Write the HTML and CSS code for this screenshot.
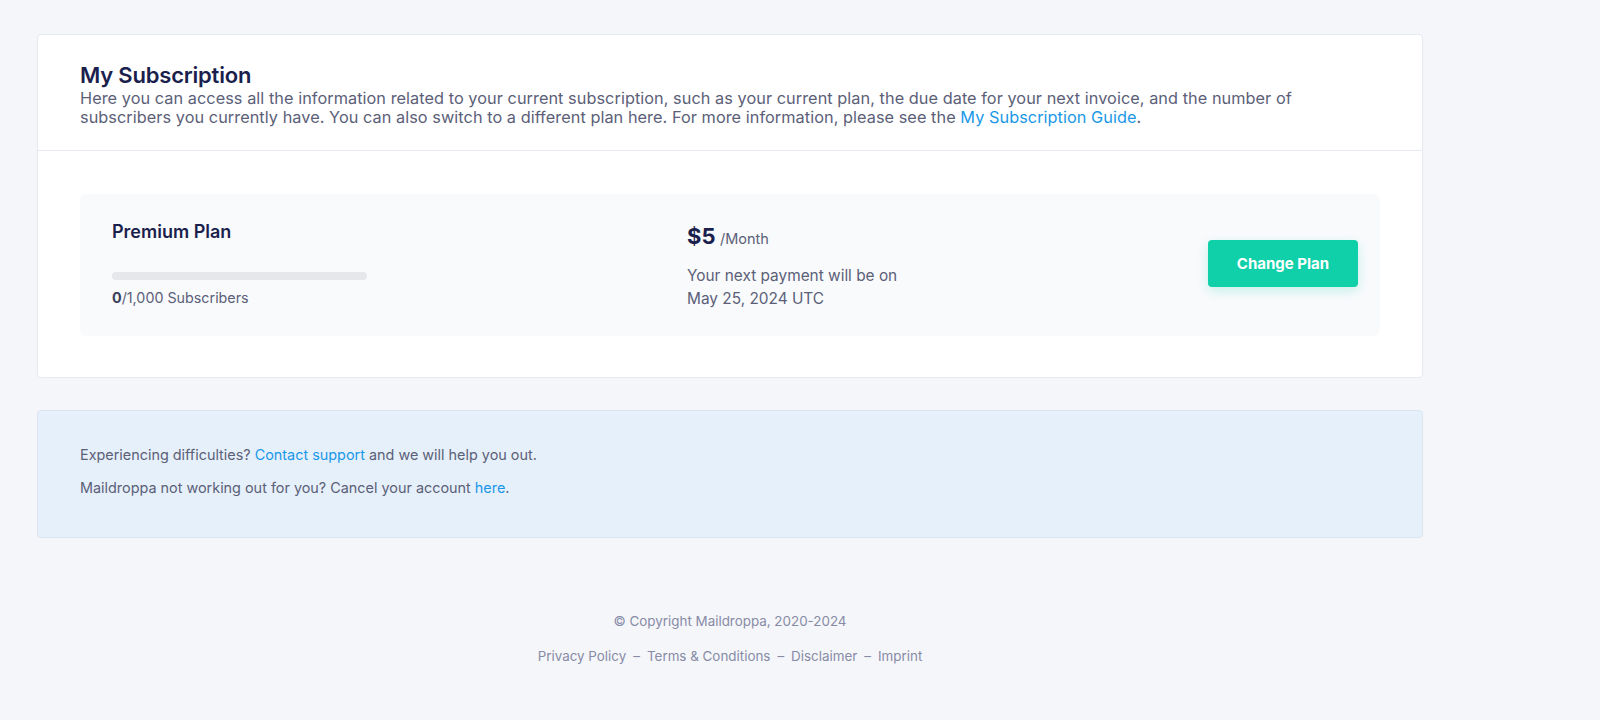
FILE: index.html
```html
<!DOCTYPE html>
<html lang="en">
<head>
<meta charset="utf-8">
<title>My Subscription</title>
<link rel="stylesheet" href="styles.css">
</head>
<body>
<main class="content">
  <section class="card">
    <header class="card-header">
      <h1 class="card-title">My Subscription</h1>
      <p class="card-desc">Here you can access all the information related to your current subscription, such as your current plan, the due date for your next invoice, and the number of subscribers you currently have. You can also switch to a different plan here. For more information, please see the <a href="#" class="link">My Subscription Guide</a>.</p>
    </header>
    <div class="card-body">
      <div class="plan">
        <div class="plan-info">
          <h2 class="plan-name">Premium Plan</h2>
          <div class="progress"><div class="progress-fill" style="width:0%"></div></div>
          <p class="plan-count"><strong>0</strong>/1,000 Subscribers</p>
        </div>
        <div class="plan-price">
          <p class="price"><span class="price-amount">$5</span> <span class="price-period">/Month</span></p>
          <p class="next-payment">Your next payment will be on<br>May 25, 2024 UTC</p>
        </div>
        <div class="plan-action">
          <button class="btn-primary" type="button">Change Plan</button>
        </div>
      </div>
    </div>
  </section>

  <section class="notice">
    <p>Experiencing difficulties? <a href="#" class="link">Contact support</a> and we will help you out.</p>
    <p>Maildroppa not working out for you? Cancel your account <a href="#" class="link">here</a>.</p>
  </section>

  <footer class="footer">
    <p class="copyright">© Copyright Maildroppa, 2020-2024</p>
    <nav class="footer-links">
      <a href="#">Privacy Policy</a><span class="sep">–</span><a href="#">Terms &amp; Conditions</a><span class="sep">–</span><a href="#">Disclaimer</a><span class="sep">–</span><a href="#">Imprint</a>
    </nav>
  </footer>
</main>
</body>
</html>
```

FILE: styles.css
```css
* { box-sizing: border-box; }

html, body {
  margin: 0;
  padding: 0;
  background: #f5f6fa;
  font-family: Inter, "Noto Sans", "Liberation Sans", sans-serif;
  color: #5b6078;
}

.content {
  width: 1386px;
  margin-left: 37px;
  padding-top: 34px;
}

.link {
  color: #1a98e8;
  text-decoration: none;
}

.card {
  background: #ffffff;
  border: 1px solid #e6e9ef;
  border-radius: 4px;
}

.card-header {
  padding: 26px 42px 24px;
  border-bottom: 1px solid #e6e9ef;
}

.card-title {
  margin: 0;
  font-size: 22px;
  line-height: 28px;
  font-weight: 600;
  color: #1b1f4d;
  letter-spacing: -0.2px;
}

.card-desc {
  margin: 0;
  font-size: 16.3px;
  line-height: 18.5px;
  color: #5b6078;
  letter-spacing: 0.05px;
}

.card-body {
  padding: 43px 42px 41px;
}

.plan {
  display: flex;
  background: #f9fafc;
  border-radius: 6px;
  padding: 26px 22px 26px 32px;
}

.plan-info {
  width: 575px;
  flex: none;
}

.plan-name {
  margin: 0;
  font-size: 18px;
  line-height: 24px;
  font-weight: 600;
  color: #1b1f4d;
}

.progress {
  margin-top: 28px;
  width: 255px;
  height: 8px;
  border-radius: 4px;
  background: #e6e7ea;
  overflow: hidden;
}

.progress-fill {
  height: 100%;
  background: #12cfaa;
}

.plan-count {
  margin: 7px 0 0;
  font-size: 14.3px;
  line-height: 22px;
  color: #5b6078;
}

.plan-count strong {
  color: #3a3f5a;
  font-weight: 700;
}

.plan-price {
  flex: 1;
}

.price {
  margin: 0 0 10px;
  line-height: 32px;
}

.price-amount {
  font-size: 22px;
  font-weight: 700;
  color: #1b1f4d;
}

.price-period {
  font-size: 14.5px;
  color: #5b6078;
}

.next-payment {
  margin: 0;
  font-size: 15.4px;
  line-height: 22.5px;
  color: #5b6078;
}

.plan-action {
  display: flex;
  align-items: center;
}

.btn-primary {
  width: 150px;
  height: 47px;
  margin-bottom: 4px;
  border: none;
  border-radius: 4px;
  background: #10d0aa;
  color: #ffffff;
  font-family: inherit;
  font-size: 15px;
  font-weight: 700;
  box-shadow: 0 4px 12px rgba(16, 208, 170, 0.22);
  cursor: pointer;
}

.notice {
  margin-top: 32px;
  background: #e6f0fa;
  border: 1px solid #dae5f1;
  border-radius: 4px;
  padding: 33px 42px 27px;
}

.notice p {
  margin: 0 0 11px;
  font-size: 14.4px;
  line-height: 22px;
  color: #5b6078;
}

.footer {
  padding-top: 73px;
  text-align: center;
  font-size: 13.4px;
  line-height: 20px;
  color: #878ba6;
}

.copyright {
  margin: 0 0 15px;
}

.footer-links a {
  color: #878ba6;
  text-decoration: none;
}

.sep {
  margin: 0 7px;
}
```
